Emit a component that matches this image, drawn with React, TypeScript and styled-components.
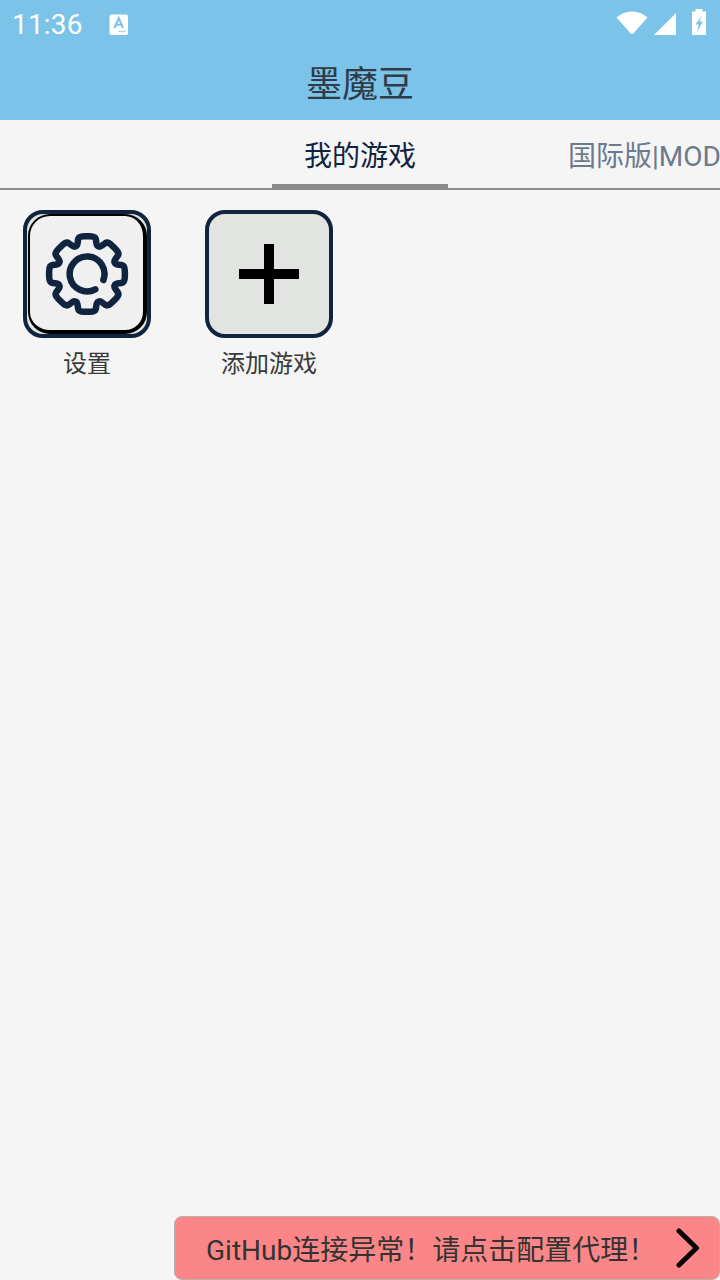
import React from "react";
import styled, { createGlobalStyle } from "styled-components";

const FONT = `Roboto, "Noto Sans CJK SC", sans-serif`;
const NAVY = "#10233f";

const GlobalStyle = createGlobalStyle`
	html, body {
		margin: 0;
		height: 100%;
		background: #f5f5f5;
	}
	#root {
		height: 100%;
	}
`;

const Page = styled.div`
	position: relative;
	display: flex;
	flex-direction: column;
	width: 720px;
	height: 1280px;
	overflow: hidden;
	background: #f5f5f5;
	font-family: ${FONT};
`;

const Header = styled.header`
	display: flex;
	flex-direction: column;
	height: 120px;
	background: #7bc3e8;
`;

const StatusBar = styled.div`
	display: flex;
	align-items: center;
	height: 50px;
	padding: 0 14px 0 12px;
	color: #ffffff;
`;

const Clock = styled.span`
	font-size: 28px;
	line-height: 50px;
	letter-spacing: 0.2px;
	width: 97px;
`;

const StatusIcons = styled.div`
	display: flex;
	align-items: flex-end;
	align-self: flex-start;
	gap: 6px;
	margin: 9px 0 0 auto;

	svg:last-child {
		margin-left: 10px;
	}
`;

const Title = styled.h1`
	margin: 0;
	font-size: 36px;
	font-weight: 400;
	line-height: 70px;
	text-align: center;
	color: #2f3b46;
`;

const TabBar = styled.nav`
	display: flex;
	flex: none;
	height: 70px;
	box-sizing: border-box;
	padding-left: 272px;
	border-bottom: 2px solid #8a8a8a;
	overflow: hidden;
`;

const Tab = styled.div<{ $active?: boolean }>`
	display: flex;
	flex: none;
	align-items: center;
	justify-content: center;
	width: ${(p) => (p.$active ? "176px" : "auto")};
	margin-left: ${(p) => (p.$active ? "0" : "120px")};
	height: 64px;
	padding-top: ${(p) => (p.$active ? "0" : "4px")};
	box-sizing: ${(p) => (p.$active ? "content-box" : "border-box")};
	font-size: 28px;
	white-space: nowrap;
	color: ${(p) => (p.$active ? NAVY : "#6b7a8c")};
	border-bottom: ${(p) => (p.$active ? "4px solid #8a8a8a" : "0")};

	${(p) => p.$active && "span { position: relative; top: 2px; }"}
`;

const Games = styled.section`
	display: flex;
	gap: 54px;
	padding: 20px 0 0 23px;
`;

const Game = styled.div`
	display: flex;
	flex-direction: column;
	align-items: center;
	width: 128px;
`;

const Tile = styled.div`
	display: flex;
	align-items: center;
	justify-content: center;
	box-sizing: border-box;
	width: 128px;
	height: 128px;
	border: 4px solid ${NAVY};
	border-radius: 20px;
	background: #e1e4e0;
`;

const SettingsFace = styled.div`
	display: flex;
	align-items: center;
	justify-content: center;
	align-self: flex-end;
	box-sizing: border-box;
	width: 119px;
	height: 120px;
	margin-left: 1px;
	padding-top: 2px;
	border-style: solid;
	border-color: #000000;
	border-width: 2px 4px 4px 2px;
	border-radius: 22px;
	background: #f0f0f0;
`;

const GameName = styled.span`
	margin-top: 10px;
	font-size: 24px;
	line-height: 32px;
	white-space: nowrap;
	color: #3a3a3a;
`;

const Notice = styled.div`
	position: absolute;
	right: 0;
	bottom: 0;
	display: flex;
	align-items: center;
	justify-content: space-between;
	box-sizing: border-box;
	width: 546px;
	height: 64px;
	padding: 0 19px 0 31px;
	border: 1px solid #b9b0b0;
	border-radius: 8px;
	background: #fc8687;
	font-size: 28px;
	color: #333333;
	white-space: nowrap;
`;

const gearPath = () => {
	const cx = 44;
	const cy = 44;
	const pts: [number, number][] = [];
	for (let i = 0; i < 8; i++) {
		const base = (i * Math.PI) / 4 - Math.PI / 2;
		const outer = 0.22;
		const inner = 0.33;
		[
			[-inner, 30],
			[-outer, 38.8],
			[outer, 38.8],
			[inner, 30],
		].forEach(([a, r]) => {
			pts.push([cx + r * Math.cos(base + a), cy + r * Math.sin(base + a)]);
		});
	}
	// round each corner with a quadratic curve
	const mid = (a: [number, number], b: [number, number], t: number) =>
		`${(a[0] + (b[0] - a[0]) * t).toFixed(2)} ${(a[1] + (b[1] - a[1]) * t).toFixed(2)}`;
	let d = "";
	pts.forEach((p, i) => {
		const prev = pts[(i + pts.length - 1) % pts.length];
		const next = pts[(i + 1) % pts.length];
		d += `${i === 0 ? "M" : "L"}${mid(p, prev, 0.35)} Q${p[0].toFixed(2)} ${p[1].toFixed(2)} ${mid(p, next, 0.35)} `;
	});
	return d + "Z";
};

const GearIcon = () => (
	<svg width="88" height="88" viewBox="0 0 88 88" fill="none" stroke={NAVY} strokeWidth="6.5" strokeLinecap="round" strokeLinejoin="round">
		<path d={gearPath()} />
		<path d="M60.4 50 A17.4 17.4 0 1 0 52.3 59.3" />
	</svg>
);

const PlusIcon = () => (
	<svg width="60" height="60" viewBox="0 0 60 60" fill="#000000">
		<rect x="25" y="0" width="10" height="60" />
		<rect x="0" y="25" width="60" height="10" />
	</svg>
);

const ChevronIcon = () => (
	<svg width="24" height="40" viewBox="0 0 24 40" fill="none" stroke="#000000" strokeWidth="5" strokeLinecap="round" strokeLinejoin="round">
		<path d="M3 3 L20.5 20 L3 37" />
	</svg>
);

const AppNotifIcon = () => (
	<svg width="20" height="22" viewBox="0 0 20 22">
		<rect x="0.5" y="0.5" width="18.5" height="20.5" rx="2" fill="#ffffff" />
		<path d="M5.5 14 L9.7 4 L14 14 M7.2 10.8 H12.2" fill="none" stroke="#7bc3e8" strokeWidth="2" />
		<path d="M10 17.5 H17" stroke="#7bc3e8" strokeWidth="1.5" strokeDasharray="1.5 0.8" />
	</svg>
);

const WifiIcon = () => (
	<svg width="32" height="24" viewBox="0 0 32 24" fill="#ffffff">
		<path d="M0.5 6.5 C9 -1.5 23 -1.5 31.5 6.5 L17.3 22.5 Q16 24 14.7 22.5 Z" />
	</svg>
);

const SignalIcon = () => (
	<svg width="22" height="22" viewBox="0 0 22 22" fill="#ffffff">
		<path d="M0 22 L22 0 V22 Z" />
	</svg>
);

const BatteryIcon = () => (
	<svg width="14" height="26" viewBox="0 0 14 26">
		<path d="M3.5 0 H10.5 V2.5 H14 V26 H0 V2.5 H3.5 Z" fill="#ffffff" />
		<path d="M10 6.5 L3.5 15.5 H6.8 L5 23 L11 12.5 H7.6 Z" fill="#7bc3e8" />
	</svg>
);

export default function App() {
	return (
		<Page>
			<GlobalStyle />
			<Header>
				<StatusBar>
					<Clock>11:36</Clock>
					<AppNotifIcon />
					<StatusIcons>
						<WifiIcon />
						<SignalIcon />
						<BatteryIcon />
					</StatusIcons>
				</StatusBar>
				<Title>墨魔豆</Title>
			</Header>
			<TabBar>
				<Tab $active><span>我的游戏</span></Tab>
				<Tab>国际版|MOD</Tab>
			</TabBar>
			<Games>
				<Game>
					<Tile>
						<SettingsFace>
							<GearIcon />
						</SettingsFace>
					</Tile>
					<GameName>设置</GameName>
				</Game>
				<Game>
					<Tile>
						<PlusIcon />
					</Tile>
					<GameName>添加游戏</GameName>
				</Game>
			</Games>
			<Notice>
				<span>GitHub连接异常！请点击配置代理！</span>
				<ChevronIcon />
			</Notice>
		</Page>
	);
}
